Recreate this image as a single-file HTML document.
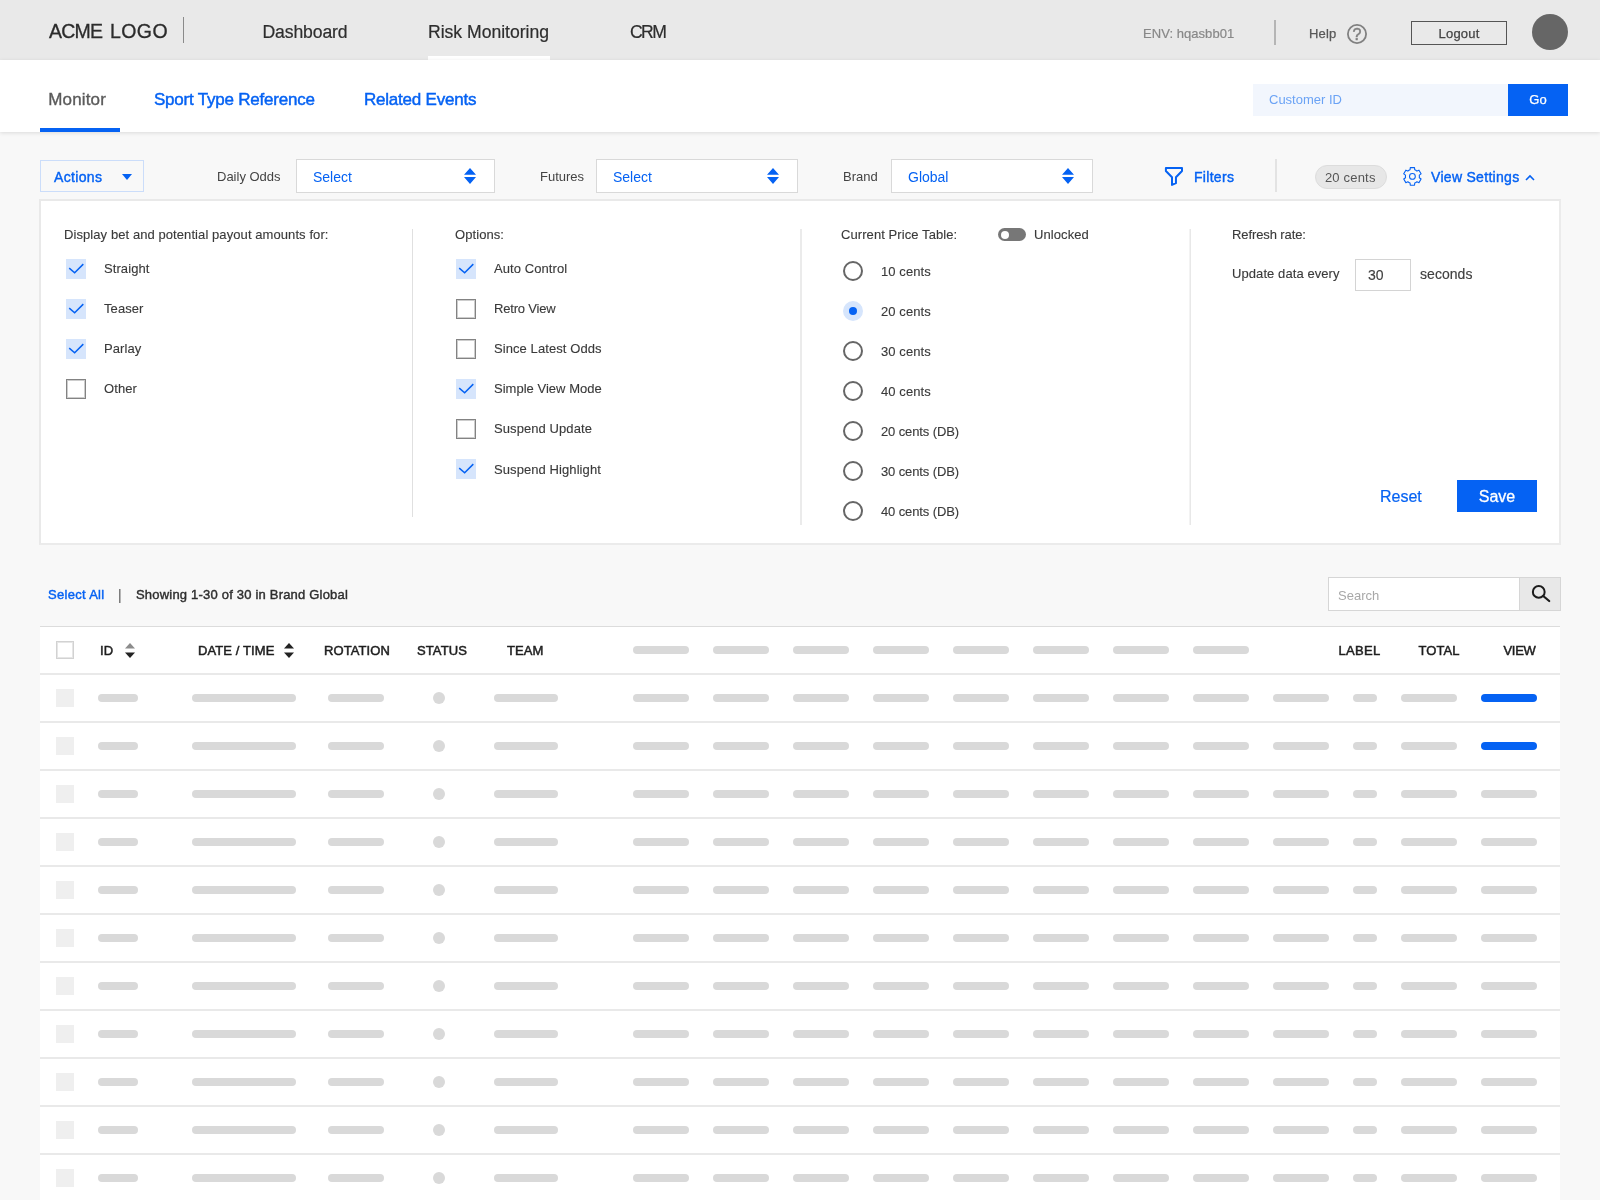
<!DOCTYPE html>
<html lang="en">
<head>
<meta charset="utf-8">
<title>Risk Monitoring - Monitor</title>
<style>
*{box-sizing:border-box;margin:0;padding:0}
html,body{width:1600px;height:1200px;overflow:hidden}
body{will-change:transform;background:#f8f8f8;font-family:"Liberation Sans",sans-serif;color:#333;position:relative;font-size:13px}
.abs{position:absolute;white-space:nowrap}
.md{-webkit-text-stroke:.4px}
/* header */
#hdr{position:absolute;left:0;top:0;width:1600px;height:60px;background:#e9e9e9}
#hdr .logo{left:49px;top:19px;font-size:19.5px;line-height:24px;color:#2b2b2b;letter-spacing:-.05px;-webkit-text-stroke:.3px #2b2b2b}
#hdr .ldiv{left:183px;top:17px;width:1px;height:26px;background:#8a8a8a}
#hdr .nav{top:20px;font-size:17.6px;line-height:24px;color:#2e2e2e;letter-spacing:-.02px;-webkit-text-stroke:.2px #2e2e2e}
#hdr .active-bar{left:428px;top:56px;width:122px;height:4px;background:#fff}
#hdr .env{left:1143px;top:26px;font-size:13px;line-height:16px;color:#888;letter-spacing:.05px;-webkit-text-stroke:.2px}
#hdr .rdiv{left:1274px;top:20px;width:2px;height:25px;background:#b5b5b5}
#hdr .help{left:1309px;top:26px;font-size:13px;line-height:16px;color:#585858;letter-spacing:.2px;-webkit-text-stroke:.25px}
#hdr .logout{left:1411px;top:21px;width:96px;height:24px;border:1px solid #555;font-size:13px;line-height:24px;text-align:center;color:#444;letter-spacing:.2px;-webkit-text-stroke:.25px}
#hdr .avatar{left:1532px;top:14px;width:36px;height:36px;border-radius:50%;background:#666}
/* subnav */
#sub{position:absolute;left:0;top:60px;width:1600px;height:72px;background:#fff;box-shadow:0 1px 4px rgba(0,0,0,.12)}
#sub .tab{top:29px;font-size:17px;line-height:22px;color:#0562f3;letter-spacing:-.22px;-webkit-text-stroke:.45px}
#sub .tab.cur{color:#5a5a5a;letter-spacing:.15px;margin-left:.3px;-webkit-text-stroke:.35px}
#sub .ubar{left:40px;top:68px;width:80px;height:4px;background:#0562f3}
#sub .cid{left:1253px;top:24px;width:255px;height:32px;background:#f2f6fd;font-size:13px;line-height:32px;padding-left:16px;color:#6ba3f5}
#sub .go{left:1508px;top:24px;width:60px;height:32px;background:#0562f3;color:#fff;font-size:13px;line-height:32px;-webkit-text-stroke:.25px;text-align:center}

/* toolbar */
.lbl{font-size:13px;line-height:16px;color:#444;top:169px}
.actions{left:40px;top:160px;width:104px;height:32px;border:1px solid #cbddfa;background:transparent}
.actions span{position:absolute;left:13px;top:7px;font-size:14px;line-height:18px;color:#0562f3;letter-spacing:.35px;-webkit-text-stroke:.4px}
.tri-d{width:0;height:0;border-left:5px solid transparent;border-right:5px solid transparent;border-top:6px solid #0562f3}
.sel{top:159px;height:34px;border:1px solid #d9d9d9;background:#fff}
.sel span{position:absolute;left:16px;top:8px;font-size:14px;line-height:18px;color:#0562f3}
.sel svg{position:absolute;right:18px;top:8px}
.blue14{font-size:14px;line-height:18px;color:#0562f3}
.pill20{left:1315px;top:165px;width:72px;height:24px;border-radius:12px;background:#e7e7e7;border:1px solid #dcdcdc;font-size:13px;line-height:24px;text-align:center;color:#555;letter-spacing:.2px;padding-right:1.5px}
/* panel */
#panel{position:absolute;left:39px;top:199px;width:1522px;height:346px;background:#fff;border:2px solid #ebebeb;border-left-color:#e9e9e9;border-top-color:#e9e9e9}
.p13{font-size:13px;line-height:16px;color:#3a3a3a;letter-spacing:.08px;-webkit-text-stroke:.12px}
.vdiv{width:1px;background:#dcdcdc}
.cb{width:20px;height:20px}
.cb.on{background:#d6e5fc}
.cb.off{background:#fff;border:1px solid #838383;box-shadow:inset 0 0 0 1px rgba(131,131,131,.4)}
.cb svg{position:absolute;left:0;top:0}
.rd{width:20px;height:20px;border-radius:50%;border:2px solid #666;background:#fff}
.rd.on{border:none;background:#d6e5fc}
.rd.on i{position:absolute;left:6px;top:6px;width:8px;height:8px;border-radius:50%;background:#0562f3}

/* table */
.info{top:587px;font-size:13px;line-height:16px;color:#2e2e2e;-webkit-text-stroke:.42px}
#search{position:absolute;left:1328px;top:577px;width:233px;height:34px;border:1px solid #d6d6d6;background:#fff}
#search span{position:absolute;left:9px;top:10px;font-size:13px;line-height:16px;color:#a8a8a8}
#search .btn{position:absolute;right:0;top:0;width:41px;height:32px;background:#e8e8e8;border-left:1px solid #d6d6d6}
#tbl{position:absolute;left:40px;top:626px;width:1520px;height:574px;background:#fff;border-top:1px solid #dcdcdc}
.th{top:16px;font-size:13px;line-height:16px;color:#1e1e1e;font-weight:400;letter-spacing:.1px;-webkit-text-stroke:.5px}
.hcb{left:16px;top:14px;width:18px;height:18px;border:1px solid #d2d2d2;background:#fff;box-shadow:inset 0 0 0 1px rgba(205,205,205,.5)}
.row{position:absolute;left:0;width:1520px;height:48px;border-top:2px solid #e9e9e9}
.row i,.hp{position:absolute;height:8px;border-radius:4px;background:#d9d9d9}
.row i{top:19px}
.row i.sq{left:16px;top:14px;width:18px;height:18px;border-radius:0;background:#efefef}
.row i.dot{left:393px;top:17px;width:12px;height:12px;border-radius:50%}
.row i.bl{background:#0562f3}
</style>
</head>
<body>
<div id="hdr">
  <div class="abs logo"><span style="letter-spacing:-.8px">ACME</span> <span style="position:absolute;left:61px;top:0;letter-spacing:.42px">LOGO</span></div>
  <div class="abs ldiv"></div>
  <div class="abs nav" style="left:262.5px;letter-spacing:-.12px">Dashboard</div>
  <div class="abs nav" style="left:428px">Risk Monitoring</div>
  <div class="abs nav" style="left:630px;letter-spacing:-1.6px">CRM</div>
  <div class="abs active-bar"></div>
  <div class="abs env">ENV: hqasbb01</div>
  <div class="abs rdiv"></div>
  <div class="abs help">Help</div>
  <svg class="abs" style="left:1346px;top:23px" width="22" height="22" viewBox="0 0 22 22"><circle cx="11" cy="11" r="9.1" fill="none" stroke="#808080" stroke-width="1.8"/><text x="11" y="16.7" font-family="Liberation Sans, sans-serif" font-size="16" fill="#808080" stroke="#808080" stroke-width=".5" text-anchor="middle">?</text></svg>
  <div class="abs logout">Logout</div>
  <div class="abs avatar"></div>
</div>
<div id="sub">
  <div class="abs tab cur" style="left:48px">Monitor</div>
  <div class="abs tab" style="left:154px">Sport Type Reference</div>
  <div class="abs tab" style="left:364px">Related Events</div>
  <div class="abs ubar"></div>
  <div class="abs cid">Customer ID</div>
  <div class="abs go">Go</div>
</div>

<div class="abs actions"><span>Actions</span><div class="abs tri-d" style="left:81px;top:13px"></div></div>
<div class="abs lbl" style="left:217px">Daily Odds</div>
<div class="abs sel" style="left:296px;width:199px"><span>Select</span><svg width="12" height="17" viewBox="0 0 12 17"><path d="M6 0L12 6.8H0Z M6 16L12 9.1H0Z" fill="#0562f3"/></svg></div>
<div class="abs lbl" style="left:540px">Futures</div>
<div class="abs sel" style="left:596px;width:202px"><span>Select</span><svg width="12" height="17" viewBox="0 0 12 17"><path d="M6 0L12 6.8H0Z M6 16L12 9.1H0Z" fill="#0562f3"/></svg></div>
<div class="abs lbl" style="left:843px">Brand</div>
<div class="abs sel" style="left:891px;width:202px"><span>Global</span><svg width="12" height="17" viewBox="0 0 12 17"><path d="M6 0L12 6.8H0Z M6 16L12 9.1H0Z" fill="#0562f3"/></svg></div>
<svg class="abs" style="left:1164px;top:166px" width="20" height="21" viewBox="0 0 20 21"><path d="M1.9 1.9V5L8 11.3V18.9L11.95 17.2V11.3L18 5V1.9Z" fill="none" stroke="#0562f3" stroke-width="2" stroke-linejoin="round"/></svg>
<div class="abs blue14 md" style="left:1194px;top:168px;letter-spacing:.3px">Filters</div>
<div class="abs" style="left:1275px;top:159px;width:1.5px;height:33px;background:#e3e3e3"></div>
<div class="abs pill20">20 cents</div>
<svg class="abs" id="gear" style="left:1402px;top:166px" width="21" height="21" viewBox="0 0 21 21"><path d="M8.06 3.80L8.29 1.60L12.51 1.60L12.74 3.80A7.00 7.00 0 0 1 14.95 5.08L16.96 4.17L19.08 7.83L17.28 9.12A7.00 7.00 0 0 1 17.28 11.68L19.08 12.97L16.96 16.63L14.95 15.72A7.00 7.00 0 0 1 12.74 17.00L12.51 19.20L8.29 19.20L8.06 17.00A7.00 7.00 0 0 1 5.85 15.72L3.84 16.63L1.72 12.97L3.52 11.68A7.00 7.00 0 0 1 3.52 9.12L1.72 7.83L3.84 4.17L5.85 5.08A7.00 7.00 0 0 1 8.06 3.80Z" fill="none" stroke="#0562f3" stroke-width="1.1" stroke-linejoin="round"/><circle cx="10.4" cy="10.4" r="2.9" fill="none" stroke="#0562f3" stroke-width="1.05"/></svg>
<div class="abs blue14 md" style="left:1431px;top:168px;letter-spacing:.3px">View Settings</div>
<svg class="abs" style="left:1524px;top:173px" width="12" height="9" viewBox="0 0 12 9"><path d="M2 7l4-4 4 4" fill="none" stroke="#0562f3" stroke-width="1.6"/></svg>

<div id="panel">
<div class="abs p13" style="left:23px;top:26px">Display bet and potential payout amounts for:</div>
<div class="abs cb on" style="left:25px;top:58px"><svg width="20" height="20" viewBox="0 0 20 20"><path d="M3.2 9.1L8.65 13.8L17.3 5.1" fill="none" stroke="#0562f3" stroke-width="1.5"/></svg></div><div class="abs p13" style="left:63px;top:60px">Straight</div>
<div class="abs cb on" style="left:25px;top:98px"><svg width="20" height="20" viewBox="0 0 20 20"><path d="M3.2 9.1L8.65 13.8L17.3 5.1" fill="none" stroke="#0562f3" stroke-width="1.5"/></svg></div><div class="abs p13" style="left:63px;top:100px">Teaser</div>
<div class="abs cb on" style="left:25px;top:138px"><svg width="20" height="20" viewBox="0 0 20 20"><path d="M3.2 9.1L8.65 13.8L17.3 5.1" fill="none" stroke="#0562f3" stroke-width="1.5"/></svg></div><div class="abs p13" style="left:63px;top:140px">Parlay</div>
<div class="abs cb off" style="left:25px;top:178px"></div><div class="abs p13" style="left:63px;top:180px">Other</div>
<div class="abs vdiv" style="left:371px;top:28px;height:288px;background:#e0e0e0"></div>
<div class="abs p13" style="left:414px;top:26px">Options:</div>
<div class="abs cb on" style="left:415px;top:58px"><svg width="20" height="20" viewBox="0 0 20 20"><path d="M3.2 9.1L8.65 13.8L17.3 5.1" fill="none" stroke="#0562f3" stroke-width="1.5"/></svg></div><div class="abs p13" style="left:453px;top:60px">Auto Control</div>
<div class="abs cb off" style="left:415px;top:98px"></div><div class="abs p13" style="left:453px;top:100px;letter-spacing:-.2px">Retro View</div>
<div class="abs cb off" style="left:415px;top:138px"></div><div class="abs p13" style="left:453px;top:140px">Since Latest Odds</div>
<div class="abs cb on" style="left:415px;top:178px"><svg width="20" height="20" viewBox="0 0 20 20"><path d="M3.2 9.1L8.65 13.8L17.3 5.1" fill="none" stroke="#0562f3" stroke-width="1.5"/></svg></div><div class="abs p13" style="left:453px;top:180px;letter-spacing:.02px">Simple View Mode</div>
<div class="abs cb off" style="left:415px;top:218px"></div><div class="abs p13" style="left:453px;top:220px">Suspend Update</div>
<div class="abs cb on" style="left:415px;top:258px"><svg width="20" height="20" viewBox="0 0 20 20"><path d="M3.2 9.1L8.65 13.8L17.3 5.1" fill="none" stroke="#0562f3" stroke-width="1.5"/></svg></div><div class="abs p13" style="left:453px;top:261px">Suspend Highlight</div>
<div class="abs vdiv" style="left:759px;top:28px;height:295.5px;width:2px;background:#ebebeb"></div>
<div class="abs p13" style="left:800px;top:26px">Current Price Table:</div>
<div class="abs" style="left:957px;top:27px;width:28px;height:13px;border-radius:7px;background:#777"><div class="abs" style="left:2.5px;top:2.5px;width:8px;height:8px;border-radius:50%;background:#fff"></div></div>
<div class="abs p13" style="left:993px;top:26px">Unlocked</div>
<div class="abs rd" style="left:802px;top:60px"></div><div class="abs p13" style="left:840px;top:63px">10 cents</div>
<div class="abs rd on" style="left:802px;top:100px"><i></i></div><div class="abs p13" style="left:840px;top:103px">20 cents</div>
<div class="abs rd" style="left:802px;top:140px"></div><div class="abs p13" style="left:840px;top:143px">30 cents</div>
<div class="abs rd" style="left:802px;top:180px"></div><div class="abs p13" style="left:840px;top:183px">40 cents</div>
<div class="abs rd" style="left:802px;top:220px"></div><div class="abs p13" style="left:840px;top:223px;letter-spacing:-.12px">20 cents (DB)</div>
<div class="abs rd" style="left:802px;top:260px"></div><div class="abs p13" style="left:840px;top:263px;letter-spacing:-.12px">30 cents (DB)</div>
<div class="abs rd" style="left:802px;top:300px"></div><div class="abs p13" style="left:840px;top:303px;letter-spacing:-.12px">40 cents (DB)</div>
<div class="abs vdiv" style="left:1148px;top:28px;height:295.5px;width:2px;background:linear-gradient(90deg,#f3f3f3 50%,#e8e8e8 50%)"></div>
<div class="abs p13" style="left:1191px;top:26px;letter-spacing:-.1px">Refresh rate:</div>
<div class="abs p13" style="left:1191px;top:65px">Update data every</div>
<div class="abs" style="left:1314px;top:58px;width:56px;height:32px;border:1px solid #d4d4d4;background:#fff;font-size:14px;line-height:30px;padding-left:12px;color:#404040;-webkit-text-stroke:.15px">30</div>
<div class="abs" style="left:1379px;top:64px;font-size:14px;line-height:18px;color:#404040;letter-spacing:.05px;-webkit-text-stroke:.15px">seconds</div>
<div class="abs" style="left:1339px;top:286px;font-size:16px;line-height:20px;color:#0562f3;-webkit-text-stroke:.2px">Reset</div>
<div class="abs" style="left:1416px;top:279px;width:80px;height:32px;background:#0562f3;color:#fff;font-size:16px;line-height:34px;text-align:center;-webkit-text-stroke:.3px">Save</div>
</div>


<div class="abs info" style="left:48px;color:#0562f3;letter-spacing:.3px">Select All</div>
<div class="abs info" style="left:118px;font-size:14px;color:#555;-webkit-text-stroke:0">|</div>
<div class="abs info" style="left:136px;letter-spacing:.2px">Showing 1-30 of 30 in Brand Global</div>
<div id="search"><span>Search</span><div class="btn"></div><svg style="position:absolute;left:200px;top:4px" width="24" height="24" viewBox="0 0 24 24"><circle cx="9.75" cy="9.9" r="5.9" fill="none" stroke="#1c1c1c" stroke-width="2"/><path d="M14.2 14L20.2 19" stroke="#1c1c1c" stroke-width="2.2" stroke-linecap="round"/></svg></div>
<div id="tbl">
<div class="abs hcb"></div>
<div class="abs th" style="left:60px">ID</div>
<svg class="abs" style="left:85px;top:16px" width="10" height="16" viewBox="0 0 10 16"><path d="M5 0L10 5.5H0Z" fill="#8c8c8c"/><path d="M5 15L10 9.5H0Z" fill="#222"/></svg>
<div class="abs th" style="left:158px">DATE / TIME</div>
<svg class="abs" style="left:244px;top:16px" width="10" height="16" viewBox="0 0 10 16"><path d="M5 0L10 5.5H0Z" fill="#222"/><path d="M5 15L10 9.5H0Z" fill="#222"/></svg>
<div class="abs th" style="left:284px">ROTATION</div>
<div class="abs th" style="left:377px">STATUS</div>
<div class="abs th" style="left:467px">TEAM</div>
<div class="hp" style="left:593px;top:19px;width:56px"></div><div class="hp" style="left:673px;top:19px;width:56px"></div><div class="hp" style="left:753px;top:19px;width:56px"></div><div class="hp" style="left:833px;top:19px;width:56px"></div><div class="hp" style="left:913px;top:19px;width:56px"></div><div class="hp" style="left:993px;top:19px;width:56px"></div><div class="hp" style="left:1073px;top:19px;width:56px"></div><div class="hp" style="left:1153px;top:19px;width:56px"></div>
<div class="abs th" style="left:1298.5px;letter-spacing:.3px">LABEL</div>
<div class="abs th" style="left:1378.5px">TOTAL</div>
<div class="abs th" style="left:1463.5px;letter-spacing:-.3px">VIEW</div>
<div class="row" style="top:46px"><i class="sq"></i><i style="left:58px;width:40px"></i><i style="left:152px;width:104px"></i><i style="left:288px;width:56px"></i><i class="dot"></i><i style="left:454px;width:64px"></i><i style="left:593px;width:56px"></i><i style="left:673px;width:56px"></i><i style="left:753px;width:56px"></i><i style="left:833px;width:56px"></i><i style="left:913px;width:56px"></i><i style="left:993px;width:56px"></i><i style="left:1073px;width:56px"></i><i style="left:1153px;width:56px"></i><i style="left:1233px;width:56px"></i><i style="left:1313px;width:24px"></i><i style="left:1361px;width:56px"></i><i class="bl" style="left:1441px;width:56px"></i></div>
<div class="row" style="top:94px"><i class="sq"></i><i style="left:58px;width:40px"></i><i style="left:152px;width:104px"></i><i style="left:288px;width:56px"></i><i class="dot"></i><i style="left:454px;width:64px"></i><i style="left:593px;width:56px"></i><i style="left:673px;width:56px"></i><i style="left:753px;width:56px"></i><i style="left:833px;width:56px"></i><i style="left:913px;width:56px"></i><i style="left:993px;width:56px"></i><i style="left:1073px;width:56px"></i><i style="left:1153px;width:56px"></i><i style="left:1233px;width:56px"></i><i style="left:1313px;width:24px"></i><i style="left:1361px;width:56px"></i><i class="bl" style="left:1441px;width:56px"></i></div>
<div class="row" style="top:142px"><i class="sq"></i><i style="left:58px;width:40px"></i><i style="left:152px;width:104px"></i><i style="left:288px;width:56px"></i><i class="dot"></i><i style="left:454px;width:64px"></i><i style="left:593px;width:56px"></i><i style="left:673px;width:56px"></i><i style="left:753px;width:56px"></i><i style="left:833px;width:56px"></i><i style="left:913px;width:56px"></i><i style="left:993px;width:56px"></i><i style="left:1073px;width:56px"></i><i style="left:1153px;width:56px"></i><i style="left:1233px;width:56px"></i><i style="left:1313px;width:24px"></i><i style="left:1361px;width:56px"></i><i class="" style="left:1441px;width:56px"></i></div>
<div class="row" style="top:190px"><i class="sq"></i><i style="left:58px;width:40px"></i><i style="left:152px;width:104px"></i><i style="left:288px;width:56px"></i><i class="dot"></i><i style="left:454px;width:64px"></i><i style="left:593px;width:56px"></i><i style="left:673px;width:56px"></i><i style="left:753px;width:56px"></i><i style="left:833px;width:56px"></i><i style="left:913px;width:56px"></i><i style="left:993px;width:56px"></i><i style="left:1073px;width:56px"></i><i style="left:1153px;width:56px"></i><i style="left:1233px;width:56px"></i><i style="left:1313px;width:24px"></i><i style="left:1361px;width:56px"></i><i class="" style="left:1441px;width:56px"></i></div>
<div class="row" style="top:238px"><i class="sq"></i><i style="left:58px;width:40px"></i><i style="left:152px;width:104px"></i><i style="left:288px;width:56px"></i><i class="dot"></i><i style="left:454px;width:64px"></i><i style="left:593px;width:56px"></i><i style="left:673px;width:56px"></i><i style="left:753px;width:56px"></i><i style="left:833px;width:56px"></i><i style="left:913px;width:56px"></i><i style="left:993px;width:56px"></i><i style="left:1073px;width:56px"></i><i style="left:1153px;width:56px"></i><i style="left:1233px;width:56px"></i><i style="left:1313px;width:24px"></i><i style="left:1361px;width:56px"></i><i class="" style="left:1441px;width:56px"></i></div>
<div class="row" style="top:286px"><i class="sq"></i><i style="left:58px;width:40px"></i><i style="left:152px;width:104px"></i><i style="left:288px;width:56px"></i><i class="dot"></i><i style="left:454px;width:64px"></i><i style="left:593px;width:56px"></i><i style="left:673px;width:56px"></i><i style="left:753px;width:56px"></i><i style="left:833px;width:56px"></i><i style="left:913px;width:56px"></i><i style="left:993px;width:56px"></i><i style="left:1073px;width:56px"></i><i style="left:1153px;width:56px"></i><i style="left:1233px;width:56px"></i><i style="left:1313px;width:24px"></i><i style="left:1361px;width:56px"></i><i class="" style="left:1441px;width:56px"></i></div>
<div class="row" style="top:334px"><i class="sq"></i><i style="left:58px;width:40px"></i><i style="left:152px;width:104px"></i><i style="left:288px;width:56px"></i><i class="dot"></i><i style="left:454px;width:64px"></i><i style="left:593px;width:56px"></i><i style="left:673px;width:56px"></i><i style="left:753px;width:56px"></i><i style="left:833px;width:56px"></i><i style="left:913px;width:56px"></i><i style="left:993px;width:56px"></i><i style="left:1073px;width:56px"></i><i style="left:1153px;width:56px"></i><i style="left:1233px;width:56px"></i><i style="left:1313px;width:24px"></i><i style="left:1361px;width:56px"></i><i class="" style="left:1441px;width:56px"></i></div>
<div class="row" style="top:382px"><i class="sq"></i><i style="left:58px;width:40px"></i><i style="left:152px;width:104px"></i><i style="left:288px;width:56px"></i><i class="dot"></i><i style="left:454px;width:64px"></i><i style="left:593px;width:56px"></i><i style="left:673px;width:56px"></i><i style="left:753px;width:56px"></i><i style="left:833px;width:56px"></i><i style="left:913px;width:56px"></i><i style="left:993px;width:56px"></i><i style="left:1073px;width:56px"></i><i style="left:1153px;width:56px"></i><i style="left:1233px;width:56px"></i><i style="left:1313px;width:24px"></i><i style="left:1361px;width:56px"></i><i class="" style="left:1441px;width:56px"></i></div>
<div class="row" style="top:430px"><i class="sq"></i><i style="left:58px;width:40px"></i><i style="left:152px;width:104px"></i><i style="left:288px;width:56px"></i><i class="dot"></i><i style="left:454px;width:64px"></i><i style="left:593px;width:56px"></i><i style="left:673px;width:56px"></i><i style="left:753px;width:56px"></i><i style="left:833px;width:56px"></i><i style="left:913px;width:56px"></i><i style="left:993px;width:56px"></i><i style="left:1073px;width:56px"></i><i style="left:1153px;width:56px"></i><i style="left:1233px;width:56px"></i><i style="left:1313px;width:24px"></i><i style="left:1361px;width:56px"></i><i class="" style="left:1441px;width:56px"></i></div>
<div class="row" style="top:478px"><i class="sq"></i><i style="left:58px;width:40px"></i><i style="left:152px;width:104px"></i><i style="left:288px;width:56px"></i><i class="dot"></i><i style="left:454px;width:64px"></i><i style="left:593px;width:56px"></i><i style="left:673px;width:56px"></i><i style="left:753px;width:56px"></i><i style="left:833px;width:56px"></i><i style="left:913px;width:56px"></i><i style="left:993px;width:56px"></i><i style="left:1073px;width:56px"></i><i style="left:1153px;width:56px"></i><i style="left:1233px;width:56px"></i><i style="left:1313px;width:24px"></i><i style="left:1361px;width:56px"></i><i class="" style="left:1441px;width:56px"></i></div>
<div class="row" style="top:526px"><i class="sq"></i><i style="left:58px;width:40px"></i><i style="left:152px;width:104px"></i><i style="left:288px;width:56px"></i><i class="dot"></i><i style="left:454px;width:64px"></i><i style="left:593px;width:56px"></i><i style="left:673px;width:56px"></i><i style="left:753px;width:56px"></i><i style="left:833px;width:56px"></i><i style="left:913px;width:56px"></i><i style="left:993px;width:56px"></i><i style="left:1073px;width:56px"></i><i style="left:1153px;width:56px"></i><i style="left:1233px;width:56px"></i><i style="left:1313px;width:24px"></i><i style="left:1361px;width:56px"></i><i class="" style="left:1441px;width:56px"></i></div>
</div>

</body>
</html>
